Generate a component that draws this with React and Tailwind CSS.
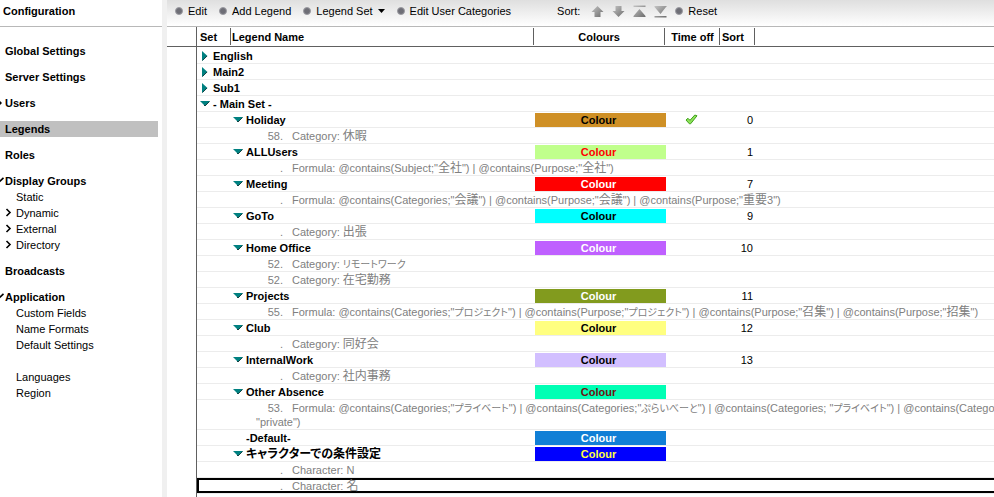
import React from "react";

const SANS = "font-['Liberation_Sans',Arial,'Noto_Sans_CJK_JP',sans-serif]";

const NAV = [
  { label: "Global Settings" },
  { label: "Server Settings" },
  { label: "Users", marker: "tip" },
  { label: "Legends", active: true },
  { label: "Roles" },
  {
    label: "Display Groups",
    marker: "open",
    groups: [[
      { label: "Static" },
      { label: "Dynamic", more: true },
      { label: "External", more: true },
      { label: "Directory", more: true },
    ]],
  },
  { label: "Broadcasts" },
  {
    label: "Application",
    marker: "open",
    groups: [
      [{ label: "Custom Fields" }, { label: "Name Formats" }, { label: "Default Settings" }],
      [{ label: "Languages" }, { label: "Region" }],
    ],
  },
];

const SETS = ["English", "Main2", "Sub1"];

const LEGENDS = [
  { name: "Holiday", bg: "bg-[#cf9026]", fg: "text-black", sort: "0", off: true, rules: [["58.", "Category: 休暇"]] },
  { name: "ALLUsers", bg: "bg-[#c0ff8c]", fg: "text-[#ff0000]", sort: "1", rules: [[".", 'Formula: @contains(Subject;"全社") | @contains(Purpose;"全社")']] },
  { name: "Meeting", bg: "bg-[#ff0000]", fg: "text-white", sort: "7", rules: [[".", 'Formula: @contains(Categories;"会議") | @contains(Purpose;"会議") | @contains(Purpose;"重要3")']] },
  { name: "GoTo", bg: "bg-[#00ffff]", fg: "text-black", sort: "9", rules: [[".", "Category: 出張"]] },
  { name: "Home Office", bg: "bg-[#bf60ff]", fg: "text-white", sort: "10", rules: [["52.", "Category: リモートワーク"], ["52.", "Category: 在宅勤務"]] },
  { name: "Projects", bg: "bg-[#829b1e]", fg: "text-white", sort: "11", rules: [["55.", 'Formula: @contains(Categories;"プロジェクト") | @contains(Purpose;"プロジェクト") | @contains(Purpose;"召集") | @contains(Purpose;"招集")']] },
  { name: "Club", bg: "bg-[#ffff80]", fg: "text-black", sort: "12", rules: [[".", "Category: 同好会"]] },
  { name: "InternalWork", bg: "bg-[#d2bfff]", fg: "text-black", sort: "13", rules: [[".", "Category: 社内事務"]] },
  { name: "Other Absence", bg: "bg-[#00ffb4]", fg: "text-[#6e1010]", rules: [["53.", 'Formula: @contains(Categories;"プライベート") | @contains(Categories;"ぷらいべーと") | @contains(Categories; "プライベイト") | @contains(Categories', '"private")']] },
  { name: "-Default-", bg: "bg-[#117fd6]", fg: "text-white", plain: true, rules: [] },
  { name: "キャラクターでの条件設定", bg: "bg-[#0000ff]", fg: "text-[#ffff40]", rules: [[".", "Character: N"], [".", "Character: 名", null, true]] },
];

// Kana are set proportionally and a size below the kanji beside them.
function Mixed({ text, bold }) {
  const parts = text.match(/[\u3040-\u30ff]+|[\u4e00-\u9fff]+|[^\u3040-\u30ff\u4e00-\u9fff]+/g) || [];
  return parts.map((part, i) => {
    if (/[\u3040-\u30ff]/.test(part)) {
      return (
        <span key={i} className={bold ? "text-[12px] leading-none [font-feature-settings:'palt']" : "text-[10px] leading-none [font-feature-settings:'palt']"}>
          {part}
        </span>
      );
    }
    if (/[\u4e00-\u9fff]/.test(part)) return <span key={i} className="text-[12px] leading-none">{part}</span>;
    return <span key={i}>{part}</span>;
  });
}

function Twisty({ open }) {
  return open ? (
    <svg width="11" height="6" viewBox="0 0 11 6" className="shrink-0" aria-hidden="true">
      <path d="M0 0H10L5 5Z" fill="#008080" />
      <path d="M9.5 .5L5 5L4 4" fill="none" stroke="#174444" strokeWidth="1" />
    </svg>
  ) : (
    <svg width="6" height="10" viewBox="0 0 6 10" className="shrink-0" aria-hidden="true">
      <path d="M0 0L5.5 5L0 10Z" fill="#008080" />
      <path d="M.5 9.5L5 5" fill="none" stroke="#174444" strokeWidth="1" />
    </svg>
  );
}

function Marker({ kind }) {
  if (kind === "tip")
    return (
      <svg width="5" height="8" viewBox="0 0 5 8" aria-hidden="true">
        <path d="M0 2L2 4L0 6Z" fill="#000" />
      </svg>
    );
  if (kind === "open")
    return (
      <svg width="5" height="8" viewBox="0 0 5 8" aria-hidden="true">
        <path d="M-1 5L3.5 .8" stroke="#000" strokeWidth="1.6" />
      </svg>
    );
  return <span className="w-[5px]" />;
}

function Sidebar() {
  return (
    <aside className="w-[162px] shrink-0 bg-white">
      <h1 className="h-[27px] border-b border-[#b8b8b8] pl-[3px] text-[11px] leading-[23px] font-bold">Configuration</h1>
      <nav aria-label="Configuration" className="mt-4 flex flex-col gap-[10px]">
        {NAV.map((item) => (
          <div key={item.label}>
            <div className="h-4 pr-1">
              <a
                href="#"
                aria-current={item.active ? "page" : undefined}
                className={`flex h-4 items-center pb-px font-bold ${item.active ? "bg-[#c0c0c0]" : ""}`}
              >
                <Marker kind={item.marker} />
                {item.label}
              </a>
            </div>
            {item.groups && (
              <div className="flex flex-col gap-4">
                {item.groups.map((group) => (
                  <ul key={group[0].label}>
                    {group.map((sub) => (
                      <li key={sub.label} className="h-4">
                        <a href="#" className="flex h-[15px] items-center">
                          <span className="flex w-4 pl-[5px]">
                            {sub.more && (
                              <svg width="7" height="9" viewBox="0 0 7 9" aria-hidden="true">
                                <path d="M1.5 1L5 4.5L1.5 8" fill="none" stroke="#000" strokeWidth="1.6" />
                              </svg>
                            )}
                          </span>
                          {sub.label}
                        </a>
                      </li>
                    ))}
                  </ul>
                ))}
              </div>
            )}
          </div>
        ))}
      </nav>
    </aside>
  );
}

function Action({ children }) {
  return (
    <button type="button" className="flex items-center gap-[5px] whitespace-nowrap">
      <span className="size-2 rounded-full border border-[#9c9ca2] bg-[#6e6e76]" />
      {children}
    </button>
  );
}

const SORT_ICONS = [
  { label: "Move up", d: "M6.5 1L12.5 7H9.5V12H3.5V7H.5Z" },
  { label: "Move down", d: "M3.5 1H9.5V6H12.5L6.5 12L.5 6H3.5Z" },
  { label: "Move to top", d: "M.5 .5H12.5V2H.5ZM6.5 4L12.5 11H.5ZM.5 11H12.5V12H.5Z" },
  { label: "Move to bottom", d: "M.5 11H12.5V12.5H.5ZM.5 1H12.5V2H12L6.5 9L.5 2Z" },
];

function Toolbar() {
  return (
    <div className="flex h-[27px] items-center border-b border-[#b8b8b8] bg-linear-to-b from-[#dfdfdf] to-white pb-1 pl-2">
      <div className="flex items-center gap-3">
        <Action>Edit</Action>
        <Action>Add Legend</Action>
        <Action>
          Legend Set
          <svg width="7" height="4" viewBox="0 0 7 4" aria-hidden="true">
            <path d="M0 0H7L3.5 4Z" fill="#000" />
          </svg>
        </Action>
        <Action>Edit User Categories</Action>
      </div>
      <span className="ml-[46px]">Sort:</span>
      <div className="mr-2 ml-[11px] flex gap-2">
        {SORT_ICONS.map((icon) => (
          <button key={icon.label} type="button" aria-label={icon.label}>
            <svg width="13" height="13" viewBox="0 0 13 13" aria-hidden="true" className="block">
              <defs>
                <linearGradient id={icon.label.replace(/ /g, "-")} x1="0" y1="0" x2="1" y2="1">
                  <stop offset="0" stopColor="#c4c4c4" />
                  <stop offset="1" stopColor="#6c6c6c" />
                </linearGradient>
              </defs>
              <path d={icon.d} fill={`url(#${icon.label.replace(/ /g, "-")})`} />
            </svg>
          </button>
        ))}
      </div>
      <Action>Reset</Action>
    </div>
  );
}

function HeadCell({ children, className = "", line = true }) {
  return (
    <th scope="col" className="p-0 pb-px">
      <div className="h-5 border-b border-[#606060] pt-px">
        <div className={`h-[17px] pt-px leading-[17px] ${line ? "border-r border-[#606060]" : ""} ${className}`}>{children}</div>
      </div>
    </th>
  );
}

const CELL = "h-4 border-b border-[#ececec] p-0 leading-[14px]";

function LegendRows({ legend }) {
  return (
    <>
      <tr>
        <td className={CELL} />
        <td className={CELL}>
          <div className={`flex h-[15px] items-center font-bold whitespace-nowrap ${legend.plain ? "pl-[15px]" : "gap-[2px] pl-[2px]"}`}>
            {!legend.plain && <Twisty open />}
            <span><Mixed text={legend.name} bold /></span>
          </div>
        </td>
        <td className={`${CELL} pt-px pl-px`}>
          <div className={`h-[14px] pr-1 text-center font-bold ${legend.bg} ${legend.fg}`}>Colour</div>
        </td>
        <td className={`${CELL} pr-1`}>
          {legend.off && (
            <svg width="13" height="11" viewBox="0 0 13 11" role="img" aria-label="Yes" className="mx-auto block">
              <path d="M1 6L3 4.3L5 6.3L9.8 1L12 1.8L5.6 9.8L4.4 9.8Z" fill="#8ee25a" stroke="#3fa01c" strokeWidth="1" />
            </svg>
          )}
        </td>
        <td className={`${CELL} pr-[2px] text-right`}>{legend.sort}</td>
        <td className={CELL} />
      </tr>
      {legend.rules.map(([num, text, more, selected], i) => (
        <tr key={i} className="text-[#808080]">
          <td colSpan={6} className={CELL}>
            <div className={`overflow-hidden whitespace-nowrap ${more ? "h-[29px]" : "h-[15px]"} ${selected ? "shadow-[inset_2px_2px_0_#000,inset_0_-2px_0_#000]" : ""}`}>
              <div className="flex h-[15px] items-baseline gap-[9px] pt-px">
                <span className="w-[86px] shrink-0 text-right">{num}</span>
                <span><Mixed text={text} /></span>
              </div>
              {more && <div className="pl-[59px] leading-[14px]">{more}</div>}
            </div>
          </td>
        </tr>
      ))}
    </>
  );
}

function LegendTable() {
  return (
    <table className="w-full table-fixed border-separate border-spacing-0">
      <colgroup>
        <col className="w-[34px]" />
        <col className="w-[303px]" />
        <col className="w-[132px]" />
        <col className="w-[54px]" />
        <col className="w-[35px]" />
        <col />
      </colgroup>
      <thead>
        <tr>
          <HeadCell className="pl-[3px] text-left">Set</HeadCell>
          <HeadCell className="pl-px text-left">Legend Name</HeadCell>
          <HeadCell className="mr-px text-center">Colours</HeadCell>
          <HeadCell className="text-center whitespace-nowrap">Time off</HeadCell>
          <HeadCell className="pl-[2px] text-left">Sort</HeadCell>
          <HeadCell line={false} />
        </tr>
      </thead>
      <tbody>
        {SETS.map((name) => (
          <tr key={name}>
            <td colSpan={6} className={CELL}>
              <div className="flex h-[15px] items-center gap-[5px] pl-[5px] font-bold">
                <Twisty />
                {name}
              </div>
            </td>
          </tr>
        ))}
        <tr>
          <td colSpan={6} className={CELL}>
            <div className="flex h-[15px] items-center gap-[2px] pl-[3px] font-bold">
              <Twisty open />
              - Main Set -
            </div>
          </td>
        </tr>
        {LEGENDS.map((legend) => (
          <LegendRows key={legend.name} legend={legend} />
        ))}
      </tbody>
    </table>
  );
}

export default function App() {
  return (
    <div className={`flex min-h-screen bg-white text-[11px] leading-[14px] text-black ${SANS}`}>
      <Sidebar />
      <div className="w-[5px] shrink-0 bg-[#f0f0f0]" />
      <main className="flex min-w-0 flex-1 flex-col overflow-hidden">
        <Toolbar />
        <div className="flex flex-1">
          <div className="flex w-[30px] shrink-0 flex-col border-r border-[#606060]">
            <div className="h-5 border-b border-[#606060]" />
          </div>
          <div className="min-w-0 flex-1">
            <LegendTable />
          </div>
        </div>
      </main>
    </div>
  );
}
